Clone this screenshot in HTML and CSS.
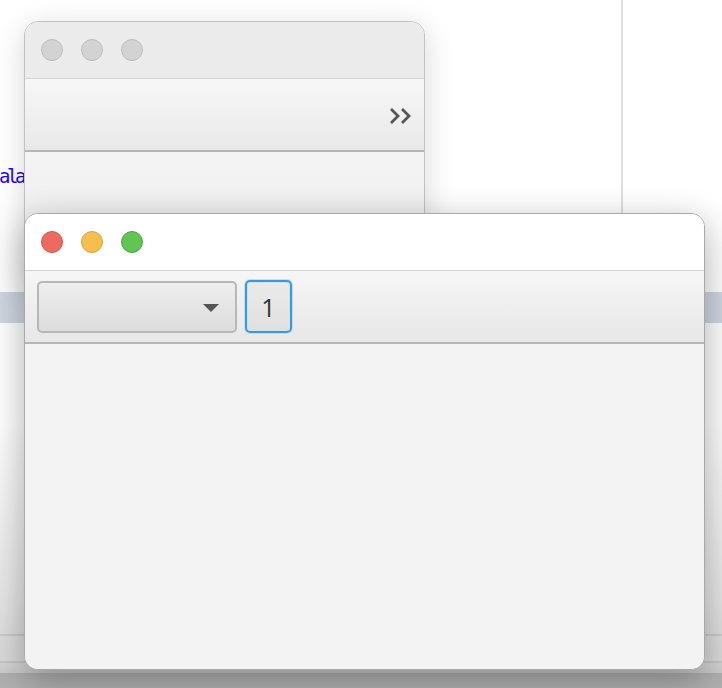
FILE: index.html
```html
<!DOCTYPE html>
<html>
<head>
<meta charset="utf-8">
<link rel="stylesheet" href="styles.css">
</head>
<body>
<div class="desk">
  <div class="vline"></div>
  <div class="code">ala</div>
  <div class="band"></div>
  <div class="hl hl1"></div>
  <div class="hl hl2"></div>
  <div class="hl hl3"></div>
  <div class="bottomshade"></div>

  <div class="win back">
    <div class="titlebar back-title">
      <span class="dot gray"></span><span class="dot gray"></span><span class="dot gray"></span>
    </div>
    <div class="toolbar back-tool">
      <svg class="chev" width="26" height="20" viewBox="0 0 26 20"><path d="M3 3 L10 10 L3 17 M14 3 L21 10 L14 17" fill="none" stroke="#555" stroke-width="2.8"/></svg>
    </div>
    <div class="content"></div>
  </div>

  <div class="win front">
    <div class="titlebar front-title">
      <span class="dot red"></span><span class="dot yellow"></span><span class="dot green"></span>
    </div>
    <div class="toolbar front-tool">
      <div class="combo"><span class="arrow"></span></div>
      <div class="btn">1</div>
    </div>
    <div class="content"></div>
  </div>
</div>
</body>
</html>
```
FILE: styles.css
```css
html, body { margin: 0; padding: 0; }
body { width: 722px; height: 688px; overflow: hidden; background: #fff; font-family: "Open Sans", "Liberation Sans", sans-serif; }
.desk { position: relative; width: 722px; height: 688px; overflow: hidden; background: linear-gradient(#ffffff 0, #ffffff 420px, #e6e6e6 600px, #d8d8d8 660px, #b8b8b8 688px); }
.vline { position: absolute; left: 621px; top: 0; width: 2px; height: 215px; background: #dedede; }
.code { position: absolute; left: -1px; top: 165px; font-family: "DejaVu Sans Mono", monospace; font-size: 19px; letter-spacing: -3.4px; color: #2a00ff; }
.band { position: absolute; left: 0; top: 292px; width: 722px; height: 31px; background: #cfd7e2; }
.hl { position: absolute; left: 0; width: 722px; height: 2px; background: rgba(0,0,0,0.08); }
.hl1 { top: 634px; }
.hl2 { top: 661px; }
.hl3 { top: 673px; background: rgba(0,0,0,0.12); }
.bottomshade { position: absolute; left: 0; top: 675px; width: 722px; height: 13px; background: #b0b0b0; }

.win { position: absolute; box-sizing: border-box; display: flex; flex-direction: column; overflow: hidden; }
.back { left: 24px; top: 21px; width: 401px; height: 260px; border: 1px solid #c2c2c2; border-radius: 14px 14px 0 0; background: #f3f3f3; box-shadow: 0 6px 30px rgba(0,0,0,0.16); }
.front { left: 24px; top: 213px; width: 681px; height: 457px; border: 1px solid #a8a8a8; border-radius: 14px; background: #f3f3f3; box-shadow: 0 10px 36px rgba(0,0,0,0.32); }

.titlebar { height: 56px; display: flex; align-items: center; gap: 18px; padding-left: 16px; border-bottom: 1px solid #d2d2d2; flex: none; }
.back-title { background: #ebebeb; }
.front-title { background: #ffffff; }
.dot { width: 22px; height: 22px; border-radius: 50%; box-sizing: border-box; border: 1px solid; }
.gray { background: #d3d3d3; border-color: #bdbdbd; }
.red { background: #ee6a5f; border-color: #d5564c; }
.yellow { background: #f5be4f; border-color: #d8a23a; }
.green { background: #61c554; border-color: #4da63f; }

.toolbar { flex: none; display: flex; align-items: center; box-sizing: border-box; border-bottom: 2px solid #b6b6b6; }
.back-tool { height: 73px; justify-content: flex-end; padding-right: 10px; background: linear-gradient(#f7f7f7, #e9e9e9); }
.chev { display: block; margin-top: 2px; }
.front-tool { height: 73px; padding-left: 12px; gap: 8px; background: linear-gradient(#f6f6f6, #e7e7e7); }

.combo { width: 200px; height: 52px; box-sizing: border-box; border: 2px solid #b7b7b7; border-radius: 5px; background: linear-gradient(#eeeeee, #dcdcdc); position: relative; display: flex; align-items: center; justify-content: flex-end; padding-right: 16px; margin-top: 1px; }
.arrow { width: 0; height: 0; border-left: 8px solid transparent; border-right: 8px solid transparent; border-top: 8px solid #555; margin-top: 1px; }
.btn { width: 47px; height: 53px; box-sizing: border-box; border: 2px solid #3c98d6; border-radius: 5px; background: linear-gradient(#eaeaea, #e0e0e0); box-shadow: 0 0 0 1px #bfe0f3, inset 0 0 0 1px #cfe3ef; display: flex; align-items: center; justify-content: center; font-size: 25px; color: #333; }

.content { flex: 1; background: #f3f3f3; }
.back .content { background: linear-gradient(#f4f4f4, #ececec); }
```
